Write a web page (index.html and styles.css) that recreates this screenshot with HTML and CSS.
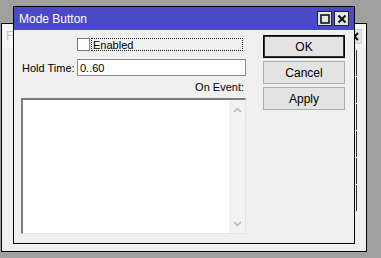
FILE: index.html
```html
<!DOCTYPE html>
<html lang="en">
<head>
    <meta charset="UTF-8">
    <title>Mode Button</title>
    <link rel="stylesheet" href="styles.css">
</head>
<body>
    <div class="desk">

        <div class="bgwin">
            <div class="bgwin-title">
                <span class="bgwin-name">F</span>
                <span class="bgwin-close">
                    <svg width="9" height="9" viewBox="0 0 9 9"><path d="M1 1L8 8M8 1L1 8" stroke="#111" stroke-width="2"/></svg>
                </span>
            </div>
            <div class="bgwin-body">
                <div class="bg-buttons">
                    <div class="bg-btn"></div>
                    <div class="bg-btn"></div>
                    <div class="bg-btn"></div>
                    <div class="bg-btn"></div>
                    <div class="bg-btn"></div>
                    <div class="bg-btn"></div>
                </div>
            </div>
        </div>

        <div class="dialog">
            <div class="titlebar">
                <span class="title">Mode Button</span>
                <div class="title-ctrls">
                    <span class="tbtn">
                        <svg width="10" height="10" viewBox="0 0 10 10"><rect x="1" y="1" width="8" height="8" fill="none" stroke="#111" stroke-width="1.6"/></svg>
                    </span>
                    <span class="tbtn">
                        <svg width="10" height="10" viewBox="0 0 10 10"><path d="M1.5 1.5L8.5 8.5M8.5 1.5L1.5 8.5" stroke="#111" stroke-width="2"/></svg>
                    </span>
                </div>
            </div>

            <div class="dialog-body">
                <div class="form">
                    <div class="row check-row">
                        <span class="checkbox"></span>
                        <span class="check-label">Enabled</span>
                    </div>
                    <div class="row">
                        <label class="field-label" for="holdTime">Hold Time:</label>
                        <input class="field" id="holdTime" type="text" value="0..60">
                    </div>
                    <div class="event-label">On Event:</div>
                    <div class="script-box">
                        <div class="script-text"></div>
                        <div class="scrollbar">
                            <svg width="9" height="6" viewBox="0 0 9 6"><path d="M1 5L4.5 1.5L8 5" fill="none" stroke="#b4b4b4" stroke-width="1.4"/></svg>
                            <svg width="9" height="6" viewBox="0 0 9 6"><path d="M1 1L4.5 4.5L8 1" fill="none" stroke="#b4b4b4" stroke-width="1.4"/></svg>
                        </div>
                    </div>
                </div>

                <div class="actions">
                    <button class="btn default">OK</button>
                    <button class="btn">Cancel</button>
                    <button class="btn">Apply</button>
                </div>
            </div>
        </div>

    </div>
</body>
</html>
```

FILE: styles.css
```css
body {
    margin: 0;
    padding: 0;
    background-color: #a0a0a0;
    font-family: "Liberation Sans", Arial, sans-serif;
    font-size: 11px;
    color: #000;
}

.desk {
    position: relative;
    width: 381px;
    height: 258px;
    overflow: hidden;
}

/* window behind the dialog */
.bgwin {
    position: absolute;
    left: 1px;
    top: 23px;
    width: 366px;
    height: 229px;
    box-sizing: border-box;
    border: 1px solid #000;
    background-color: #f0f0f0;
    display: flex;
    flex-direction: column;
}

.bgwin-title {
    height: 24px;
    background-color: #f6f6f6;
    display: flex;
    align-items: center;
    justify-content: space-between;
    padding: 0 4px 0 4px;
}

.bgwin-name {
    color: #c4c4c4;
    font-size: 12px;
}

.bgwin-close {
    width: 15px;
    height: 15px;
    box-sizing: border-box;
    border: 1px solid #d0d0d0;
    background-color: #e4e4e4;
    display: flex;
    align-items: center;
    justify-content: center;
}

.bgwin-body {
    flex: 1;
    display: flex;
    justify-content: flex-end;
    padding: 2px 9px 0 0;
}

.bg-buttons {
    display: flex;
    flex-direction: column;
    gap: 1px;
}

.bg-btn {
    width: 60px;
    height: 26px;
    border-right: 1px solid #333;
    background-color: #f0f0f0;
}

/* dialog */
.dialog {
    position: absolute;
    left: 13px;
    top: 6px;
    width: 342px;
    height: 238px;
    box-sizing: border-box;
    border: 1px solid #000;
    background-color: #f0f0f0;
}

.titlebar {
    height: 23px;
    background-color: #4a4ac6;
    display: flex;
    align-items: center;
    justify-content: space-between;
    padding: 0 5px 0 5px;
}

.title {
    color: #fff;
    font-size: 12px;
}

.title-ctrls {
    display: flex;
    gap: 2px;
}

.tbtn {
    width: 15px;
    height: 15px;
    box-sizing: border-box;
    border: 1px solid #222;
    background-color: #e6e6e6;
    display: flex;
    align-items: center;
    justify-content: center;
}

.dialog-body {
    display: flex;
    padding: 5px 9px 0 7px;
}

.form {
    width: 225px;
    margin-top: 3px;
    display: flex;
    flex-direction: column;
}

.row {
    display: flex;
    align-items: center;
}

.check-row {
    height: 13px;
    padding-left: 56px;
    margin-bottom: 8px;
}

.checkbox {
    width: 13px;
    height: 13px;
    box-sizing: border-box;
    border: 1px solid #767676;
    background-color: #fff;
}

.check-label {
    margin-left: 1px;
    padding-left: 1px;
    flex: 1;
    height: 13px;
    line-height: 12px;
    box-sizing: border-box;
    border: 1px dotted #222;
    margin-right: 3px;
}

.field-label {
    width: 55px;
    padding-left: 1px;
}

.field {
    flex: 1;
    height: 17px;
    box-sizing: border-box;
    border: 1px solid #8a8a8a;
    padding: 0 2px;
    font-family: "Liberation Sans", Arial, sans-serif;
    font-size: 11px;
    background-color: #fff;
    margin: 0;
}

.event-label {
    text-align: right;
    padding-right: 2px;
    height: 13px;
    line-height: 13px;
    margin-top: 5px;
    margin-bottom: 4px;
}

.script-box {
    height: 136px;
    box-sizing: border-box;
    border-top: 2px solid #7c7c7c;
    border-left: 2px solid #7c7c7c;
    border-right: 1px solid #e4e4e4;
    border-bottom: 1px solid #e4e4e4;
    background-color: #fff;
    display: flex;
}

.script-text {
    flex: 1;
}

.scrollbar {
    width: 16px;
    background-color: #f2f2f2;
    display: flex;
    flex-direction: column;
    justify-content: space-between;
    align-items: center;
    padding: 7px 0 6px 0;
}

.actions {
    width: 82px;
    margin-left: 17px;
    display: flex;
    flex-direction: column;
    gap: 3px;
}

.btn {
    height: 23px;
    box-sizing: border-box;
    border: 1px solid #adadad;
    background-color: #e3e3e3;
    font-family: "Liberation Sans", Arial, sans-serif;
    font-size: 12px;
    color: #000;
    padding: 0;
}

.btn.default {
    border-color: #000;
    box-shadow: inset 0 0 0 1px #333;
}
```
